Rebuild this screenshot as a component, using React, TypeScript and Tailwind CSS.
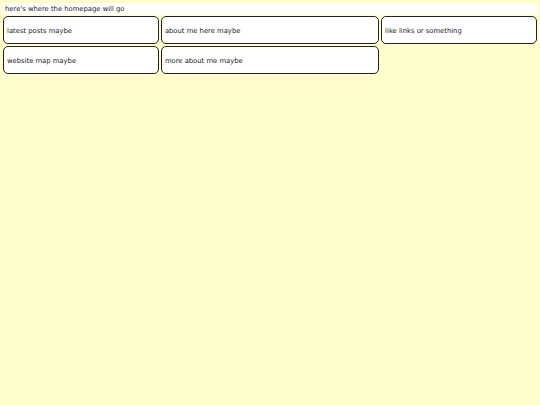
import React from 'react';

const boxes = [
    'latest posts maybe',
    'about me here maybe',
    'like links or something',
    'website map maybe',
    'more about me maybe',
];

export default function App() {
    return (
        <div className="min-h-screen bg-[#fffdc9] p-[3px] text-[6.8px] text-[#1a1a1a] font-['DejaVu_Sans',Verdana,sans-serif]">
            <div className="bg-white h-[12px] px-[2px] pt-[1px] flex items-center">here's where the homepage will go</div>
            <div className="mt-[1px] grid grid-cols-[1fr_1.4fr_1fr] gap-[2px]">
                {boxes.map((label) => (
                    <div key={label} className="h-[28px] bg-white border border-[#222] rounded-[5px] px-[3px] pt-[3px] flex items-center">
                        {label}
                    </div>
                ))}
            </div>
        </div>
    );
}
